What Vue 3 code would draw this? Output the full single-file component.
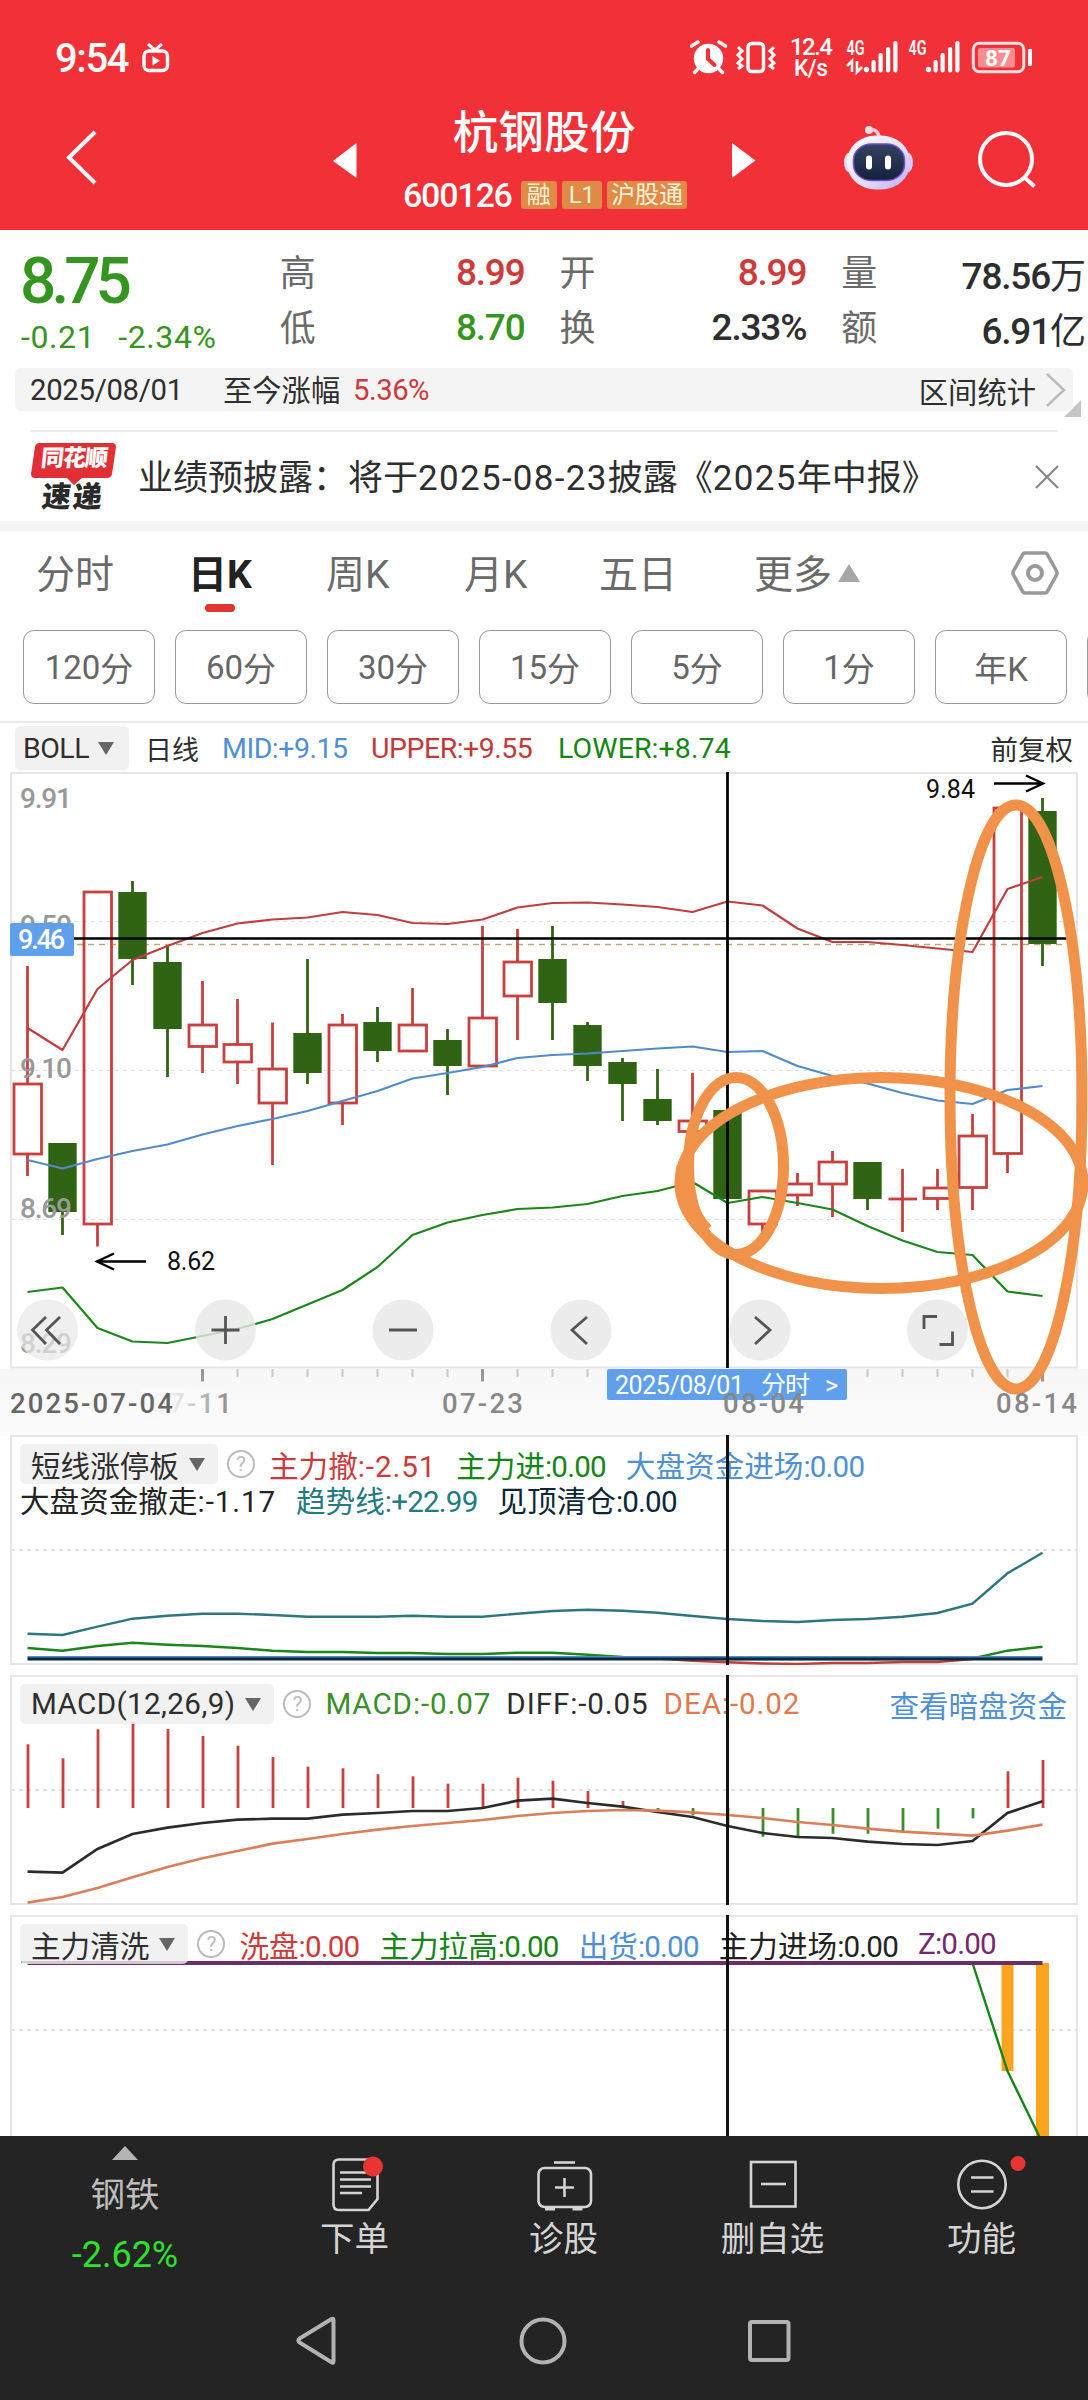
<script setup>
const quotes = [
  [{ k: '高', v: '8.99', c: 'up' }, { k: '低', v: '8.70', c: 'down' }],
  [{ k: '开', v: '8.99', c: 'up' }, { k: '换', v: '2.33%', c: '' }],
  [{ k: '量', v: '78.56', u: '万', c: '' }, { k: '额', v: '6.91', u: '亿', c: '' }],
]
const tabs = ['分时', '日K', '周K', '月K', '五日']
const periods = [
  { n: '120', t: '分' }, { n: '60', t: '分' }, { n: '30', t: '分' }, { n: '15', t: '分' },
  { n: '5', t: '分' }, { n: '1', t: '分' }, { n: '', t: '年K' }, { n: '', t: '' },
]

const x = (i) => 27.5 + i * 35
const line = (ys) => ys.map((y, i) => `${x(i)},${y}`).join(' ')

// [direction, high, body top, body bottom, low]
const candles = [
  [1, 966, 1084, 1154, 1176], [0, 1143, 1143, 1212, 1235], [1, 892, 892, 1224, 1246.5],
  [0, 881, 892, 959, 985], [0, 945, 962, 1029, 1077], [1, 981, 1025, 1046.5, 1073],
  [1, 999, 1044.5, 1062, 1084], [1, 1022.5, 1069, 1103, 1165], [0, 959, 1033, 1073, 1084],
  [1, 1014, 1025, 1103, 1125], [0, 1007, 1022, 1051, 1062], [1, 988, 1025, 1051, 1051],
  [0, 1029, 1040, 1066, 1095], [1, 926, 1018, 1066, 1066], [1, 929, 962, 996, 1040],
  [0, 926, 959, 1003, 1040], [0, 1022, 1025, 1066, 1081], [0, 1058, 1062, 1084, 1121],
  [0, 1069, 1099, 1121, 1125], [1, 1073, 1121, 1131.5, 1131.5], [0, 1110, 1110, 1199, 1199],
  [1, 1191, 1191, 1224, 1233], [1, 1173, 1184, 1195, 1206], [1, 1151, 1162, 1184, 1217],
  [0, 1162, 1162, 1199, 1210], [1, 1169, 1199, 1199, 1232], [1, 1169, 1188, 1198.5, 1210],
  [1, 1114, 1136, 1187.5, 1210], [1, 808, 808, 1153.5, 1173], [0, 798, 811, 944, 966],
].map(([up, h, t, b, l], i) => ({ up, h, t, b, l, cx: x(i) }))

const upper = line([1028, 1050, 989, 960, 946, 933, 923.5, 919.5, 917.5, 912, 915, 923, 924, 919.5, 907.5, 903, 902.5, 904.5, 907, 912, 901.5, 905.5, 928.5, 942, 942, 945, 948.5, 952, 889, 877])
const mid = line([1160, 1168.5, 1159, 1151, 1144.5, 1134.5, 1126, 1119, 1111, 1101, 1091, 1078.5, 1073, 1067, 1058, 1055, 1053.5, 1051, 1048.5, 1046.5, 1052, 1051, 1066, 1076, 1083.5, 1093, 1100.5, 1104, 1090, 1086])
const lower = line([1292, 1287.5, 1328, 1341.5, 1343, 1336, 1329, 1319, 1304.5, 1290, 1267, 1235, 1222.5, 1215, 1209, 1207.5, 1204, 1196, 1191, 1182, 1203, 1197, 1203, 1209.5, 1226, 1240.5, 1252, 1255, 1291.5, 1296])
const ticks = Array.from({ length: 25 }, (_, k) => ({ cx: x(k + 5), major: k % 8 === 0 }))

const trend = line([1633.7, 1635, 1626.7, 1618.7, 1615.7, 1613.7, 1613.7, 1615, 1616.7, 1616.7, 1616.7, 1615.7, 1616.7, 1616.7, 1613.7, 1611, 1609.7, 1610.7, 1612.7, 1616, 1619, 1621, 1622, 1620, 1619, 1616.7, 1613, 1603.7, 1573.3, 1552.7])
const inflow = line([1648, 1650.7, 1646, 1642.7, 1644.7, 1646, 1648, 1650.7, 1652, 1652, 1653, 1653, 1654, 1654, 1652.7, 1652.7, 1654.7, 1657, 1658.5, 1659, 1659, 1659, 1659, 1659, 1659, 1659, 1659, 1658.5, 1650.7, 1646.7])
const outflow = [1658.5, 1660.7, 1662.3, 1663.5, 1664, 1663, 1663, 1662, 1662, 1659].map((y, i) => `${x(i + 18)},${y}`).join(' ')

const diff = line([1871.7, 1872.7, 1849, 1834, 1827.7, 1823, 1819.7, 1818.7, 1818.7, 1814.7, 1813, 1811, 1811, 1808, 1800.7, 1798.7, 1803, 1806.7, 1812, 1817, 1826, 1833, 1837, 1838, 1841.7, 1844, 1845, 1841, 1813, 1801.3])
const dea = line([1902.7, 1897, 1888, 1877.3, 1867, 1858.3, 1851, 1843.7, 1839, 1834, 1829.7, 1826, 1823, 1820, 1816, 1813, 1811, 1810, 1810.7, 1812.3, 1815, 1818, 1822, 1825, 1828.7, 1831.7, 1833.7, 1835.7, 1830.7, 1824.7])
const hist = [1744.3, 1758.3, 1729.3, 1722.3, 1729, 1736, 1745.7, 1757, 1766.7, 1768.3, 1774.3, 1776.3, 1783.7, 1783.7, 1777.7, 1780.7, 1791, 1801, 1811.7, 1815.3, 1827, 1836.7, 1836.7, 1833.7, 1833.7, 1831.7, 1828.7, 1818.3, 1771.3, 1760]

const panels = [
  {
    id: 'short', title: '短线涨停板', num: '',
    rows: [
      [{ k: '主力撤', v: ':-2.51', c: '#cc3b3b' }, { k: '主力进', v: ':0.00', c: '#158515' }, { k: '大盘资金进场', v: ':0.00', c: '#4f8fd6' }],
      [{ k: '大盘资金撤走', v: ':-1.17', c: '#222' }, { k: '趋势线', v: ':+22.99', c: '#257a80' }, { k: '见顶清仓', v: ':0.00', c: '#0b2636' }],
    ],
  },
  {
    id: 'macd', title: '', num: 'MACD(12,26,9)',
    rows: [[{ k: '', v: 'MACD:-0.07', c: '#3a8f2a' }, { k: '', v: 'DIFF:-0.05', c: '#2c2c2c' }, { k: '', v: 'DEA:-0.02', c: '#dd7a4e' }]],
    link: '查看暗盘资金',
  },
  {
    id: 'wash', title: '主力清洗', num: '',
    rows: [[{ k: '洗盘', v: ':0.00', c: '#cc3b3b' }, { k: '主力拉高', v: ':0.00', c: '#158515' }, { k: '出货', v: ':0.00', c: '#4f8fd6' }, { k: '主力进场', v: ':0.00', c: '#222' }, { k: '', v: 'Z:0.00', c: '#74296f' }]],
  },
]
</script>

<template>
  <div class="app">
    <header class="top">
      <div class="status">
        <span class="clock">9:54</span>
        <svg class="tv" width="28" height="30" viewBox="0 0 28 30" fill="none" stroke="#fff" stroke-width="3.4">
          <rect x="2" y="8" width="23.500" height="19.500" rx="5" />
          <path d="M6 1l7 6 7-6" stroke-width="3" />
          <path d="M10.500 13v9.500l7.500-4.700z" fill="#fff" stroke="none" />
        </svg>
        <svg class="signals" width="346" height="60" viewBox="690 28 346 60" fill="#fff">
          <circle cx="708.500" cy="58.500" r="14.700" />
          <path d="M691.500 46l6.500-4M725.500 46l-6.500-4M698 69l-3.500 3.500M719 69l3.500 3.500" stroke="#fff" stroke-width="3.500" stroke-linecap="round" />
          <path d="M708 50v9l6.500 6" stroke="#f23038" stroke-width="4" fill="none" stroke-linecap="round" />
          <rect x="748" y="43.500" width="15.500" height="28" rx="3.500" fill="none" stroke="#fff" stroke-width="3.400" />
          <path d="M738 47l4 4-4 4 4 4-4 4 4 3-4 3M774 47l-4 4 4 4-4 4 4 4-4 3 4 3" fill="none" stroke="#fff" stroke-width="3" />
          <text x="790" y="55" font-size="24" font-weight="500" textLength="43">12.4</text>
          <text x="794" y="75.500" font-size="23" font-weight="500" textLength="34">K/s</text>
          <g font-size="19.500" font-weight="600">
            <text x="846.500" y="55" textLength="18" lengthAdjust="spacingAndGlyphs">4G</text>
            <text x="908.500" y="55" textLength="18" lengthAdjust="spacingAndGlyphs">4G</text>
          </g>
          <path d="M847 66l5-5v11M857 61v11l5-5" fill="none" stroke="#fff" stroke-width="2.600" />
          <g v-for="sx in [866.500, 928.500]" :key="sx">
            <circle :cx="sx" cy="69.500" r="2.700" />
            <rect :x="sx + 5" y="60" width="4.200" height="12.500" rx="2" />
            <rect :x="sx + 12" y="53" width="4.200" height="19.500" rx="2" />
            <rect :x="sx + 19.500" y="47" width="4.200" height="25.500" rx="2" />
            <rect :x="sx + 26.800" y="41" width="4.200" height="31.500" rx="2" />
          </g>
          <rect x="973.300" y="43.300" width="50.500" height="28.500" rx="6" fill="none" stroke="#fff" stroke-width="3" opacity=".85" />
          <rect x="978" y="48" width="37" height="19.500" rx="2" opacity=".45" />
          <text x="985" y="65.500" font-size="22.500" font-weight="700" textLength="26">87</text>
          <rect x="1028" y="49" width="4" height="17" rx="1" />
        </svg>
      </div>
      <div class="title-bar">
        <svg class="back" width="34" height="56" viewBox="0 0 34 56" fill="none" stroke="#fff" stroke-width="4"><path d="M30 2L4 27.500 30 53" /></svg>
        <svg class="prev" width="24" height="36" viewBox="0 0 24 36"><path d="M0 18L23.500 0v35z" fill="#fff" /></svg>
        <div class="stock">
          <h1>杭钢股份</h1>
          <div class="code"><b>600126</b><i>融</i><i>L1</i><i class="wide">沪股通</i></div>
        </div>
        <svg class="next" width="24" height="36" viewBox="0 0 24 36"><path d="M23.500 17.500L0 0v35z" fill="#fff" /></svg>
        <svg class="robot" width="72" height="68" viewBox="842 124 72 68">
          <defs>
            <linearGradient id="shell" x1="0" y1="0" x2="1" y2="1"><stop offset="0" stop-color="#fff" /><stop offset=".6" stop-color="#e4dcfa" /><stop offset="1" stop-color="#b9a6ee" /></linearGradient>
            <linearGradient id="visor" x1="0" y1="0" x2="0" y2="1"><stop offset="0" stop-color="#35435f" /><stop offset="1" stop-color="#16203f" /></linearGradient>
          </defs>
          <path d="M868 130c7-2 11 2 11.500 9" fill="none" stroke="#f0c6d4" stroke-width="3.500" />
          <circle cx="869" cy="130" r="4" fill="#fbdde6" />
          <ellipse cx="849.500" cy="162.500" rx="5.500" ry="10" fill="#e6dcfa" />
          <ellipse cx="907.500" cy="162.500" rx="5.500" ry="10" fill="#d8c8f6" />
          <rect x="847" y="135.500" width="63" height="54" rx="29" ry="26" fill="url(#shell)" />
          <rect x="853.500" y="144" width="51" height="36.500" rx="18" ry="16" fill="url(#visor)" stroke="#6d4fd0" stroke-width="1.500" />
          <rect x="866" y="155.500" width="6" height="14" rx="3" fill="#fff" />
          <rect x="885" y="155.500" width="6" height="14" rx="3" fill="#fff" />
        </svg>
        <svg class="search" width="60" height="60" viewBox="977 130 60 60" fill="none" stroke="#fff" stroke-width="4"><circle cx="1006" cy="159" r="26" /><path d="M1024 177l10.500 9.500" /></svg>
      </div>
    </header>

    <section class="quote">
      <div class="last">
        <strong>8.75</strong>
        <p><span>-0.21</span><span>-2.34%</span></p>
      </div>
      <div v-for="(col, i) in quotes" :key="i" class="qcol" :class="'q' + i">
        <div v-for="q in col" :key="q.k" class="qrow"><label>{{ q.k }}</label><span :class="q.c">{{ q.v }}<em v-if="q.u">{{ q.u }}</em></span></div>
      </div>
    </section>

    <section class="range">
      <span class="date">2025/08/01</span><span class="since">至今涨幅</span><span class="pct">5.36%</span>
      <span class="stat">区间统计</span>
      <svg class="chev" width="22" height="36" viewBox="0 0 22 36" fill="none" stroke="#bbb" stroke-width="2.500"><path d="M2 2l17 16L2 34" /></svg>
      <svg class="corner" width="17" height="17" viewBox="0 0 17 17"><path d="M17 0v17H0z" fill="#c6c6c6" /></svg>
    </section>

    <section class="news">
      <div class="logo">
        <svg width="86" height="44" viewBox="0 0 86 44"><path d="M8 0h73q4 0 4 4l-4 27q-1 4-5 4H51l-8 7-7-7H4q-4 0-4-4L4 4q1-4 4-4z" fill="#e22f35" /></svg>
        <span class="brand">同花顺</span>
        <span class="express">速递</span>
      </div>
      <p>业绩预披露：将于<b>2025-08-23</b>披露<i>《</i><b>2025</b>年中报<i>》</i></p>
      <svg class="close" width="24" height="24" viewBox="0 0 24 24" stroke="#888" stroke-width="2.200"><path d="M1 1l22 22M23 1L1 23" /></svg>
    </section>

    <nav class="tabs">
      <span v-for="(t, i) in tabs" :key="t" :class="['t' + i, { on: i === 1 }]">{{ t }}</span>
      <span class="t5">更多</span>
      <svg class="more" width="22" height="18" viewBox="0 0 22 18"><path d="M11 0l11 18H0z" fill="#a6a6a6" /></svg>
      <svg class="gear" width="48" height="44" viewBox="0 0 48 44" fill="none" stroke="#999" stroke-width="4"><path d="M14 2h20q1.500 0 2.300 1.400L45.500 20q1 2 0 4L36.300 40.600Q35.500 42 34 42H14q-1.500 0-2.300-1.400L2.500 24q-1-2 0-4l9.200-16.600Q12.500 2 14 2z" stroke-width="3.600" /><circle cx="24" cy="22" r="7" /></svg>
    </nav>
    <div class="periods"><span v-for="(p, i) in periods" :key="i"><b>{{ p.n }}</b>{{ p.t }}</span></div>

    <section class="boll">
      <span class="chip">BOLL<i></i></span>
      <span class="day">日线</span>
      <span class="mid">MID:+9.15</span><span class="upper">UPPER:+9.55</span><span class="lower">LOWER:+8.74</span>
      <span class="adj">前复权</span>
    </section>

    <svg class="kline" width="1088" height="664" viewBox="0 772 1088 664">
      <defs>
        <linearGradient id="axis" x1="0" y1="0" x2="0" y2="1"><stop offset="0" stop-color="#f6f6f6" /><stop offset="1" stop-color="#fcfcfc" /></linearGradient>
        <linearGradient id="fade" x1="0" y1="0" x2="1" y2="0"><stop offset="0" stop-color="#fafafa" /><stop offset=".35" stop-color="#fafafa" stop-opacity=".9" /><stop offset="1" stop-color="#fafafa" stop-opacity="0" /></linearGradient>
      </defs>
      <rect x="0" y="1369" width="1088" height="67" fill="url(#axis)" />
      <rect x="11" y="773" width="1066" height="594.500" fill="#fff" stroke="#e6e6e6" stroke-width="2" />
      <path d="M11 921.500H1077M11 1070.500H1077M11 1219.500H1077" stroke="#dedede" stroke-dasharray="4 4" />
      <path d="M11 944.500H1077" stroke="#c2a878" stroke-width="1.600" stroke-dasharray="6 5" />
      <g v-for="c in candles" :key="c.cx">
        <template v-if="c.up">
          <path :d="`M${c.cx} ${c.h}V${c.t}M${c.cx} ${c.b}V${c.l}`" stroke="#c8403e" stroke-width="2.800" />
          <path v-if="c.t === c.b" :d="`M${c.cx - 14} ${c.t}h28.500`" stroke="#c8403e" stroke-width="2.800" />
          <rect v-else :x="c.cx - 13.500" :y="c.t" width="27.500" :height="c.b - c.t" fill="none" stroke="#c8403e" stroke-width="2.800" />
        </template>
        <template v-else>
          <path :d="`M${c.cx} ${c.h}V${c.l}`" stroke="#306414" stroke-width="2.800" />
          <rect :x="c.cx - 14.200" :y="c.t" width="28.400" :height="c.b - c.t" fill="#306414" />
        </template>
      </g>
      <g fill="none" stroke-width="2.200" stroke-linejoin="round">
        <polyline :points="upper" stroke="#bf3f3f" />
        <polyline :points="mid" stroke="#518bcb" />
        <polyline :points="lower" stroke="#1c851c" />
      </g>
      <g class="axis-num">
        <text x="20" y="808" textLength="52">9.91</text>
        <text x="20" y="934.500" textLength="52">9.50</text>
        <text x="20" y="1078" textLength="52">9.10</text>
        <text x="20" y="1218" textLength="52">8.69</text>
        <text x="20" y="1353" textLength="52">8.29</text>
      </g>
      <path d="M146 1261.500H98M114 1253.500L97 1261.500l17 8M994 783.500h48M1026 775.500l17 8-17 8" stroke="#000" stroke-width="2.400" fill="none" />
      <g font-size="25" fill="#111">
        <text x="167" y="1270" textLength="48">8.62</text>
        <text x="926" y="798" textLength="49">9.84</text>
      </g>
      <path v-for="t in ticks" :key="t.cx" :d="`M${t.cx} 1369v${t.major ? 12.500 : 8}`" :stroke="t.major ? '#999' : '#c8c8c8'" :stroke-width="t.major ? 3 : 2" />
      <path d="M11 938.500H1077" stroke="#000" stroke-width="2.600" />
      <rect x="10" y="923" width="64" height="33" rx="2" fill="#5f9fec" />
      <text x="18" y="949" font-size="27" font-weight="500" fill="#fff" textLength="47">9.46</text>
      <g v-for="cx in [47.500, 225.500, 403, 581, 760, 937.500]" :key="cx"><circle :cx="cx" cy="1330" r="30.500" fill="#e8e8e8" :fill-opacity="cx < 50 ? 0.7 : 0.82" /></g>
      <g fill="none" stroke="#555" stroke-width="2.800">
        <path d="M46 1317l-13.500 13 13.500 14M60 1317l-13.500 13 13.500 14" />
        <path d="M211.500 1330H239.500M225.500 1316v28M389 1330h28" />
        <path d="M587 1317l-15 13 15 14M755 1317l15 13-15 14" />
        <path d="M924 1329v-12.500h13M939.500 1344.500h13v-13" />
      </g>
      <path d="M727.500 772V1368" stroke="#000" stroke-width="2.800" />
      <g fill="none" stroke="#f0924a" stroke-width="11">
        <ellipse cx="1016" cy="1097" rx="66" ry="292" />
        <ellipse cx="881.500" cy="1183" rx="201.500" ry="105.500" />
        <ellipse cx="736" cy="1166" rx="47.500" ry="88.500" />
      </g>
      <path d="M684 1165q0 43 22 66" fill="none" stroke="#f0924a" stroke-width="15" />
      <rect x="607" y="1369" width="240" height="31" rx="2" fill="#5f9fec" />
      <g font-size="25" fill="#fff">
        <text x="615" y="1393.500" textLength="129">2025/08/01</text>
        <text x="761" y="1393.500" textLength="49">分时</text>
        <text x="825" y="1393.500">&gt;</text>
      </g>
      <g class="dates">
        <text x="151" y="1413" textLength="81">07-11</text>
        <rect x="140" y="1388" width="92" height="30" fill="url(#fade)" />
        <text x="10" y="1413" textLength="163" class="first">2025-07-04</text>
        <text x="442" y="1413" textLength="81">07-23</text>
        <text x="723" y="1413" textLength="81">08-04</text>
        <text x="996" y="1413" textLength="81">08-14</text>
      </g>
    </svg>

    <section v-for="(p, n) in panels" :key="p.id" class="panel" :class="p.id">
      <svg v-if="n === 0" class="plot" width="1088" height="230" viewBox="0 1435 1088 230" fill="none">
        <rect x="11" y="1436" width="1066" height="228" stroke="#e6e6e6" stroke-width="2" />
        <path d="M11 1550H1077" stroke="#e2e2e2" stroke-width="2" stroke-dasharray="4 4" />
        <g stroke-width="2.400">
          <polyline :points="outflow" stroke="#bf3f3f" />
          <polyline :points="inflow" stroke="#1c851c" />
          <polyline :points="trend" stroke="#2d7680" />
        </g>
        <path d="M27.500 1657H1042.500" stroke="#518bcb" stroke-width="2" />
        <path d="M27.500 1659H1042.500" stroke="#0b2a3c" stroke-width="3.200" />
      </svg>
      <svg v-else-if="n === 1" class="plot" width="1088" height="230" viewBox="0 1675 1088 230" fill="none">
        <rect x="11" y="1676" width="1066" height="228" stroke="#e6e6e6" stroke-width="2" />
        <path d="M11 1790H1077" stroke="#e2e2e2" stroke-width="2" stroke-dasharray="4 4" />
        <path v-for="(h, i) in hist" :key="i" :d="`M${x(i) + 0.5} 1808V${h}`" :stroke="h < 1808 ? '#c8403e' : '#3a8f2a'" stroke-width="2.800" />
        <polyline :points="diff" stroke="#2b2b2b" stroke-width="2.700" />
        <polyline :points="dea" stroke="#d97f5a" stroke-width="2.700" />
      </svg>
      <svg v-else class="plot" width="1088" height="221" viewBox="0 1915 1088 221" fill="none">
        <path d="M11 2140V1916H1077V2140" stroke="#e6e6e6" stroke-width="2" />
        <path d="M11 2030H1077" stroke="#e2e2e2" stroke-width="2" stroke-dasharray="4 4" />
        <path d="M1001.500 1963h12v108h-12zM1036 1963h13v180h-13z" fill="#fca420" />
        <path d="M972.500 1963l35 108 32 66" stroke="#158515" stroke-width="2.400" />
        <path d="M21 1962h7" stroke="#158515" stroke-width="2" />
        <path d="M27.500 1963H1042.500" stroke="#6b2f68" stroke-width="4" />
      </svg>
      <div class="legend">
        <span class="chip">{{ p.title }}<b v-if="p.num">{{ p.num }}</b><i></i></span>
        <span class="help">?</span>
        <span v-for="l in p.rows[0]" :key="l.k + l.v" class="item" :class="{ signed: l.v.includes('-') }" :style="{ color: l.c }">{{ l.k }}<b>{{ l.v }}</b></span>
        <a v-if="p.link">{{ p.link }}</a>
      </div>
      <div v-if="p.rows[1]" class="legend second">
        <span v-for="l in p.rows[1]" :key="l.k" class="item" :class="{ signed: l.v.includes('-') }" :style="{ color: l.c }">{{ l.k }}<b>{{ l.v }}</b></span>
      </div>
      <div class="cross"></div>
    </section>

    <footer>
      <div class="actions">
        <div class="sector">
          <svg width="26" height="14" viewBox="0 0 26 14"><path d="M13 0l13 14H0z" fill="#b4b4b4" /></svg>
          <span>钢铁</span><em>-2.62%</em>
        </div>
        <div class="action">
          <svg width="60" height="60" viewBox="325 2154 60 60" fill="none" stroke="#d4d4d4" stroke-width="2.600">
            <path d="M339 2159.500h33q5.500 0 5.500 5.500v34l-9 11h-29.500q-5.500 0-5.500-5.500v-39.500q0-5.500 5.500-5.500z" />
            <path d="M340 2172.500h31M340 2179.500h31M340 2186.500h31M340 2193h22" />
            <circle cx="373" cy="2166.500" r="10" fill="#e93434" stroke="none" />
          </svg><span>下单</span>
        </div>
        <div class="action">
          <svg width="60" height="60" viewBox="534 2154 60 60" fill="none" stroke="#d4d4d4" stroke-width="2.600">
            <path d="M554 2162.500h21" /><rect x="538.500" y="2168" width="52.500" height="39" rx="6" /><path d="M545 2209h10M572.500 2209h10" stroke-width="3" /><path d="M555 2187.500h19M564.500 2178v19" />
          </svg><span>诊股</span>
        </div>
        <div class="action">
          <svg width="60" height="60" viewBox="743 2154 60 60" fill="none" stroke="#d4d4d4" stroke-width="2.600"><rect x="751" y="2162" width="44.500" height="44.500" /><path d="M761 2184h25" /></svg><span>删自选</span>
        </div>
        <div class="action">
          <svg width="90" height="60" viewBox="937.500 2154 90 60" fill="none" stroke="#d4d4d4" stroke-width="2.600"><circle cx="982.500" cy="2184.500" r="23.700" /><path d="M971.500 2177.500H994M971.500 2191.500H994" /><circle cx="1018.500" cy="2163.500" r="7.500" fill="#e93434" stroke="none" /></svg><span>功能</span>
        </div>
      </div>
      <div class="sysnav">
        <svg width="42" height="52" viewBox="295 2316 42 52"><path d="M333.500 2321v41.500q0 2-2 .800L299.500 2343.500q-2-2 0-4L331.500 2320q2-1 2 1z" /></svg>
        <svg width="48" height="48" viewBox="519.500 2317.500 48 48"><circle cx="543.500" cy="2341.500" r="21.500" /></svg>
        <svg width="46" height="46" viewBox="746.500 2318.500 46 46"><rect x="750.500" y="2322.500" width="38.500" height="38" rx="2" /></svg>
      </div>
    </footer>
  </div>
</template>

<style>
body { margin: 0; background: #fff; }
</style>

<style scoped>
.app { width: 1088px; height: 2400px; overflow: hidden; display: flex; flex-direction: column; background: #fff; color: #2e2e2e; font-family: Roboto, "Noto Sans CJK SC", sans-serif; }
.app * { box-sizing: border-box; }
.app > * { flex: none; }
svg { display: block; flex: none; }
i, em { font-style: normal; }
b { font-weight: inherit; }
span, p, h1, label { white-space: nowrap; }

.top { height: 230px; background: #f23038; color: #fff; }
.status { height: 96px; display: flex; align-items: center; padding: 20px 52px 0 55px; }
.clock { font-size: 40px; font-weight: 500; letter-spacing: -1.4px; width: 87px; }
.signals { margin-left: auto; }
.title-bar { height: 134px; display: flex; align-items: flex-start; padding-left: 65px; }
.back { margin-top: 34px; }
.prev { margin: 47px 0 0 234px; }
.stock { width: 300px; margin-left: 37px; display: flex; flex-direction: column; align-items: center; }
h1 { margin: 10px 0 0; font-size: 45.700px; line-height: 56px; font-weight: 500; }
.code { display: flex; align-items: center; margin-top: 17px; height: 32px; margin-left: 2px; }
.code b { font-size: 34px; letter-spacing: -1.200px; font-weight: 500; margin-right: 9px; }
.code i { height: 28px; line-height: 28px; padding: 0 6px; margin-right: 5px; border-radius: 3px; background: #e08a48; color: #fff3d6; font-size: 24px; }
.code i:nth-child(3) { padding: 0 7px; }
.code .wide { padding: 0 4px; margin: 0; }
.next { margin: 47px 0 0 38px; }
.robot { margin: 28px 0 0 86px; }
.search { margin: 34px 0 0 63px; }

.quote { height: 138px; display: flex; padding: 15px 2px 0 20px; }
.last { width: 260px; color: #369521; }
.last strong { display: block; font-size: 64px; font-weight: 500; line-height: 73px; letter-spacing: -5px; }
.last p { margin: 0 0 0 1px; font-size: 32px; line-height: 38px; display: flex; gap: 23px; letter-spacing: .6px; }
.qcol { display: flex; flex-direction: column; }
.q0 { width: 245px; margin-right: 35px; }
.q1 { width: 247px; margin-right: 35px; }
.q2 { width: 245px; }
.qrow { height: 55px; display: flex; justify-content: space-between; align-items: center; font-size: 37px; }
.qrow label { font-size: 36px; color: #6a6a6a; padding-bottom: 6px; }
.qrow span { font-weight: 500; letter-spacing: -1.200px; }
.qrow em { font-weight: 400; font-size: 36px; letter-spacing: 0; }
.up, .pct { color: #cc3a3a; }
.down { color: #369521; }

.range { position: relative; height: 43px; margin: 0 15px; background: #f4f4f4; border-radius: 6px; display: flex; align-items: center; padding: 0 6px 0 15px; font-size: 29.300px; }
.date { width: 193px; letter-spacing: -.3px; }
.since { width: 130px; padding-bottom: 4px; }
.pct { letter-spacing: -.5px; }
.stat { margin-left: auto; margin-right: 9px; }
.corner { position: absolute; right: -8px; bottom: -6px; }

.news { height: 92px; margin: 19px 30px 0; border-top: 2px solid #ebebeb; display: flex; align-items: center; }
.logo { position: relative; width: 108px; height: 90px; padding: 11px 0 0 1px; }
.brand { position: absolute; left: 11px; top: 10px; font-size: 23px; line-height: 34px; font-weight: 900; color: #fff; transform: skewX(-6deg); letter-spacing: -1px; }
.express { position: absolute; left: 12px; top: 49px; font-size: 29px; line-height: 32px; font-weight: 900; color: #2a2a2a; transform: skewX(-6deg); letter-spacing: 2px; }
.news p { margin: 0; font-size: 35px; padding-bottom: 5px; }
.news p b { letter-spacing: 1.300px; }
.close { margin-left: auto; margin-right: -1px; }

.tabs { height: 93px; margin-top: -1px; border-top: 10px solid #f4f4f4; display: flex; align-items: center; font-size: 39px; color: #6a6a6a; padding: 0 29px 0 36px; }
.tabs span { position: relative; padding-bottom: 4px; }
.t0 { width: 152px; }
.t1, .t2 { width: 138px; }
.t3 { width: 135px; }
.t4 { width: 155px; }
.t5 { width: 84px; }
.on { color: #222; font-weight: 700; }
.on::after { content: ""; position: absolute; left: 17px; top: 61px; width: 30px; height: 8px; border-radius: 4px; background: #e03535; }
.gear { margin-left: auto; }
.periods { height: 110px; margin-top: -1px; padding: 17px 0 0 23px; display: flex; gap: 20px; border-bottom: 2px solid #ebebeb; overflow: hidden; }
.periods span { flex: none; width: 132px; height: 74px; border: 1.500px solid #999; border-radius: 11px; display: flex; align-items: center; justify-content: center; font-size: 33px; color: #666; }

.boll { height: 49px; display: flex; align-items: center; padding: 1px 15px 0; font-size: 28.500px; }
.chip { display: flex; align-items: center; background: rgba(238, 238, 238, .8); border-radius: 5px; }
.chip i { border: 8.500px solid transparent; border-top: 13px solid #666; border-bottom: 0; }
.boll .chip { width: 114px; height: 44px; padding-left: 8px; gap: 9px; }
.boll .chip, .mid, .upper { letter-spacing: -.5px; }
.day { margin-left: 16px; font-size: 27px; }
.mid { color: #4f8fd6; margin-left: 23px; width: 149px; }
.upper { color: #c23a3a; width: 187px; }
.lower { color: #158515; letter-spacing: .1px; }
.adj { margin-left: auto; font-size: 27.500px; }

.kline text { white-space: pre; }
.axis-num { font-size: 28px; fill: #999; font-weight: 500; }
.dates { font-size: 27.500px; fill: #888; font-weight: 500; }
.first { fill: #666; }

.panel { position: relative; height: 240px; padding: 9px 0 0 20px; margin-top: -1px; margin-bottom: 1px; }
.wash { height: 221px; margin-bottom: 0; }
.plot { position: absolute; left: 0; top: 0; }
.legend { position: relative; height: 40px; display: flex; align-items: center; font-size: 29.600px; padding-right: 21px; }
.panel .chip { height: 40px; padding: 0 13px 0 11px; gap: 10px; }
.legend b { letter-spacing: -.8px; }
.legend .signed b { letter-spacing: .9px; }
.macd .chip b { letter-spacing: .4px; }
.help { width: 28px; height: 28px; margin: 0 14px 0 9px; border: 2px solid #bbb; border-radius: 50%; color: #bbb; font-size: 21px; line-height: 24px; text-align: center; }
.item { margin-right: 20px; }
.macd .signed { margin-right: 15px; }
.legend a { margin-left: auto; color: #4f8fd6; }
.second { height: 30px; }
.cross { position: absolute; left: 726px; top: 0; width: 3px; height: 230px; background: #111; }
.wash .cross { height: 221px; }

footer { height: 264px; background: #242424; }
.actions { height: 160px; display: flex; padding-left: 20px; color: #d4d4d4; font-size: 34.500px; }
.sector { width: 210px; margin-right: 20px; padding-top: 10px; display: flex; flex-direction: column; align-items: center; color: #bdbdbd; }
.sector span { line-height: 46px; margin-top: 12px; }
.sector em { color: #2fe02f; font-size: 36px; line-height: 44px; margin-top: 15px; letter-spacing: 0; }
.action { width: 209px; padding-top: 18px; display: flex; flex-direction: column; align-items: center; }
.action span { line-height: 46px; margin-top: 2px; }
.sysnav { height: 90px; display: flex; align-items: center; padding-left: 295px; }
.sysnav svg { fill: none; stroke: #b2b2b2; stroke-width: 4px; }
.sysnav svg + svg { margin-left: 182px; }
.sysnav svg:last-child { margin-left: 179px; }
</style>
